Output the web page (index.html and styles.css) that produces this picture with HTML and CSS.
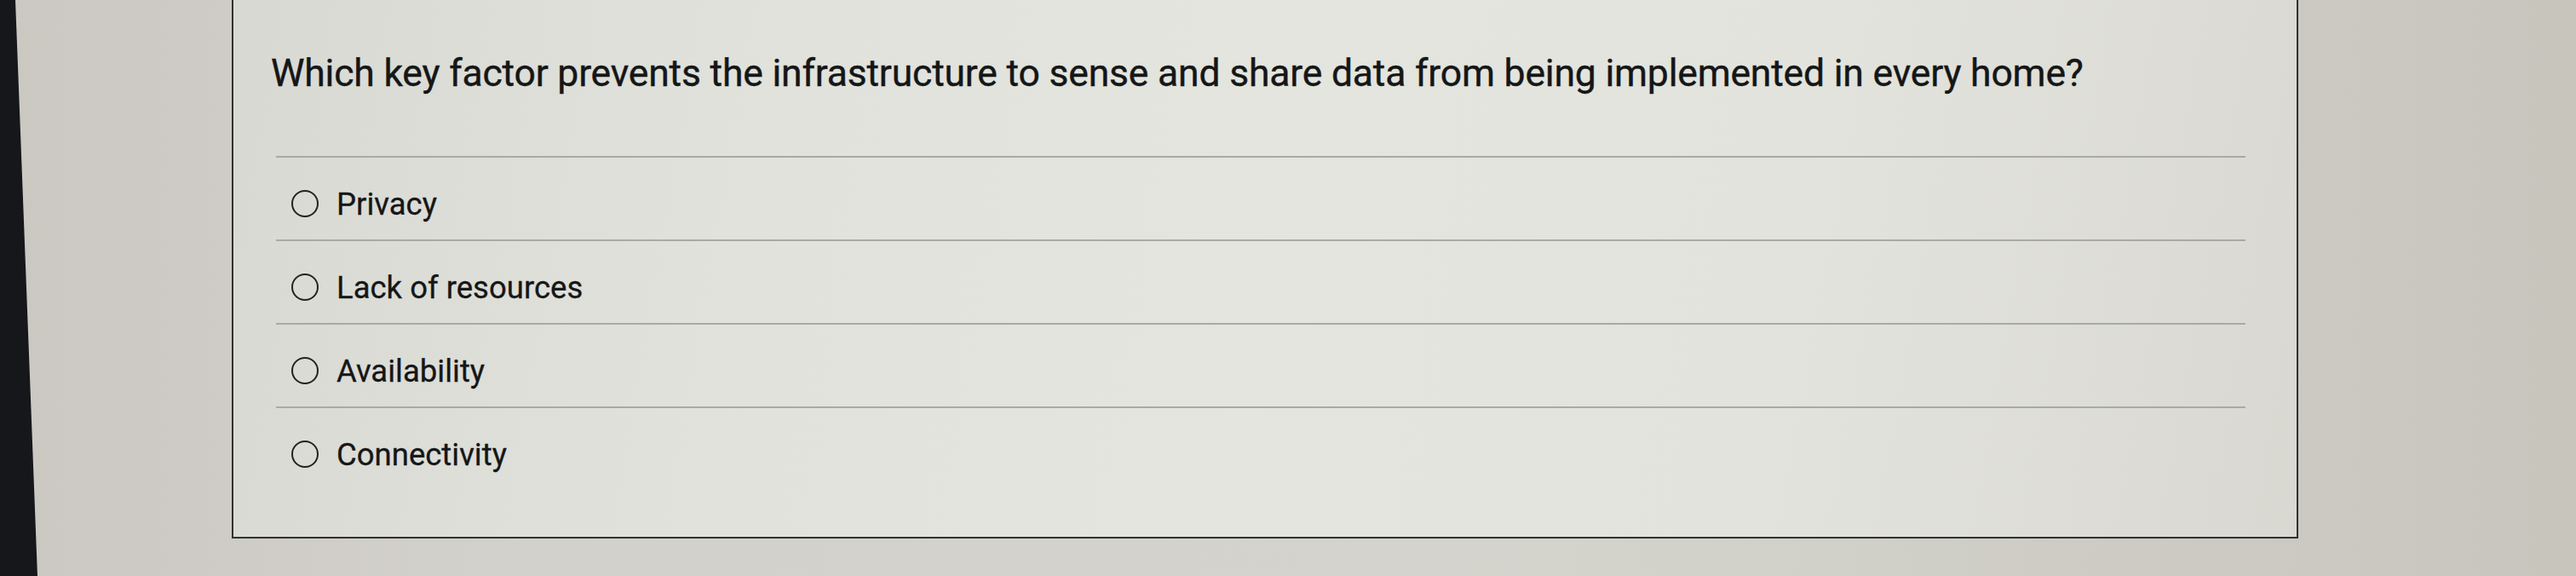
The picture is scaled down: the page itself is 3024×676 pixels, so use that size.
FILE: index.html
```html
<!DOCTYPE html>
<html lang="en">
<head>
<meta charset="utf-8">
<title>Quiz question</title>
<link rel="stylesheet" href="styles.css">
</head>
<body>
<div class="screen">
  <div class="edge"></div>
  <div class="side"></div>
  <div class="card">
    <h1 class="question">Which key factor prevents the infrastructure to sense and share data from being implemented in every home?</h1>
    <ul class="options">
      <li class="option"><span class="radio"></span><span class="label">Privacy</span></li>
      <li class="option"><span class="radio"></span><span class="label">Lack of resources</span></li>
      <li class="option"><span class="radio"></span><span class="label">Availability</span></li>
      <li class="option"><span class="radio"></span><span class="label">Connectivity</span></li>
    </ul>
  </div>
  <div class="side right"></div>
</div>
</body>
</html>
```

FILE: styles.css
```css
html, body {
  margin: 0;
  padding: 0;
}
body {
  width: 3024px;
  height: 676px;
  overflow: hidden;
  font-family: Roboto, "Liberation Sans", Arial, sans-serif;
  color: #151617;
}
.screen {
  display: flex;
  height: 676px;
  background: linear-gradient(90deg, #cbc8c2 0%, #d3d1cb 20%, #d4d4cd 60%, #c8c5bd 100%);
}
.edge {
  flex: 0 0 44px;
  background: #15171a;
  clip-path: polygon(0 0, 18px 0, 44px 100%, 0 100%);
}
.side {
  flex: 0 0 228px;
}
.side.right {
  flex: 1 1 auto;
}
.card {
  flex: 0 0 2426px;
  box-sizing: border-box;
  height: 632px;
  border: 2px solid #303130;
  border-top: none;
  background: linear-gradient(100deg, #d8d9d3 0%, #e0e2db 25%, #e3e5de 50%, #e2e3dc 75%, #d9d9d2 100%);
  padding: 60px 60px 0 44px;
}
.question {
  margin: 0;
  font-size: 44.5px;
  font-weight: 400;
  line-height: 52px;
  letter-spacing: -0.2px;
  white-space: nowrap;
  -webkit-text-stroke: 0.4px #151617;
}
.options {
  list-style: none;
  margin: 71px 0 0 6px;
  padding: 0;
}
.option {
  display: flex;
  align-items: center;
  box-sizing: border-box;
  height: 98px;
  padding: 12px 0 0 18px;
  border-top: 2px solid #a9aaa4;
}
.radio {
  flex: 0 0 auto;
  width: 28px;
  height: 28px;
  border: 2.5px solid #222;
  border-radius: 50%;
  margin-right: 21px;
}
.label {
  font-size: 36.5px;
  line-height: 43px;
  -webkit-text-stroke: 0.3px #151617;
}
```
